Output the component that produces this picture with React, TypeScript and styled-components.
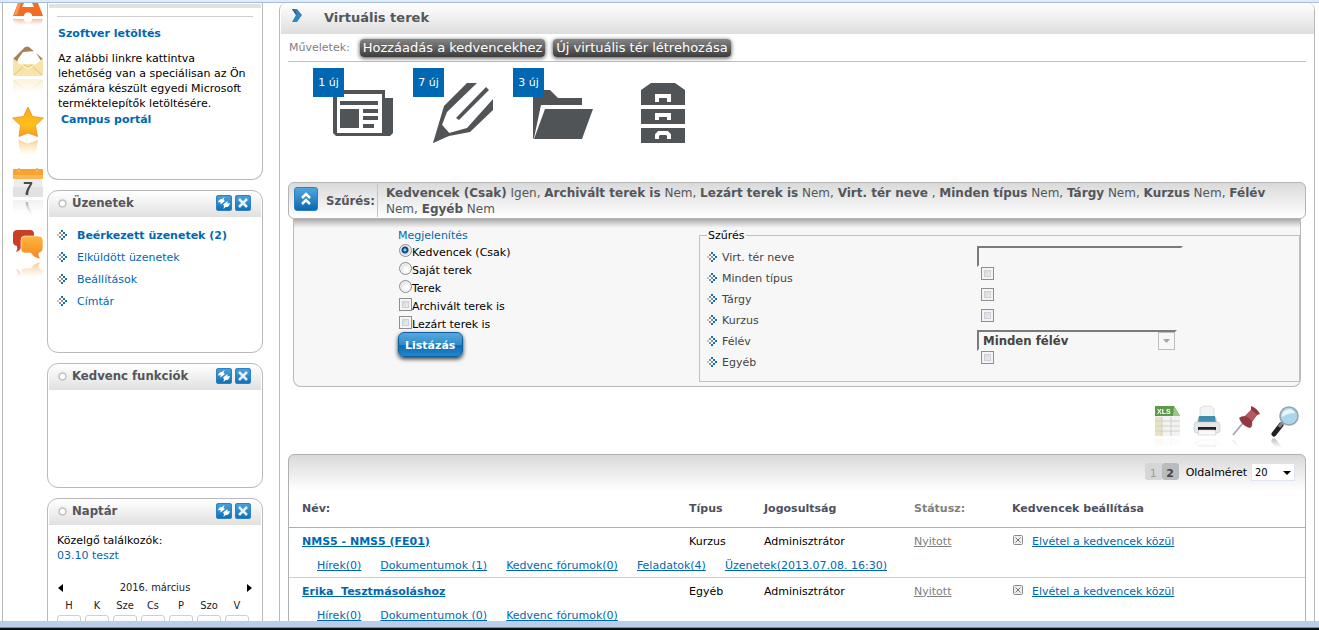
import React from "react";
import styled, { createGlobalStyle } from "styled-components";

const sans = '"DejaVu Sans", Verdana, sans-serif';
const condensed = '"DejaVu Sans Condensed", "DejaVu Sans", Tahoma, sans-serif';

const blue = "#0068b3";
const slate = "#53565a";
const line = "#b9b9b9";

const GlobalStyle = createGlobalStyle`
  *, *::before, *::after { box-sizing: border-box; }
  body {
    margin: 0;
    background: #fff;
    color: #000;
    font-family: ${sans};
    font-size: 11px;
    line-height: 15px;
  }
  a { color: ${blue}; }
  button, input, select { font: inherit; margin: 0; }
  h1, h2, p, ul, dl, dd { margin: 0; padding: 0; }
  ul { list-style: none; }
`;

/* ---------- page frame ---------- */

const Page = styled.div`
  display: flex;
  flex-direction: column;
  height: 100vh;
  overflow: hidden;
`;

const TopEdge = styled.div`
  flex: none;
  height: 3px;
  background: #dfeafa;
  border-bottom: 1px solid #a5bfda;
`;

const BottomEdge = styled.div`
  flex: none;
  height: 9px;
  background: #b8d0ea;
  border-bottom: 2px solid #0b0f14;
  box-shadow: inset 0 -1px 0 #2fb4cf;
`;

const Body = styled.div`
  flex: 1;
  min-height: 0;
  display: flex;
  margin-left: 2px;
  padding-right: 4px;
  border-left: 1px solid ${line};
  overflow: hidden;
`;

/* ---------- icon rail ---------- */

const Rail = styled.nav`
  flex: none;
  width: 44px;
  display: flex;
  flex-direction: column;
  padding-left: 9px;
`;

const RailLink = styled.a<{ $first?: boolean }>`
  display: block;
  height: ${(p) => (p.$first ? 42 : 61)}px;
  svg {
    display: block;
    -webkit-box-reflect: below 1px linear-gradient(transparent 50%, rgba(0, 0, 0, 0.5));
  }
`;

/* ---------- side panels ---------- */

const Side = styled.aside`
  flex: none;
  width: 216px;
  display: flex;
  flex-direction: column;
  gap: 10px;
`;

const Panel = styled.section<{ $min: number; $open?: boolean }>`
  flex: none;
  min-height: ${(p) => p.$min}px;
  padding: 1px;
  border: 1px solid #bcb8bb;
  border-top-width: ${(p) => (p.$open ? 0 : 1)}px;
  border-radius: ${(p) => (p.$open ? "0 0 11px 11px" : "11px")};
`;

const PanelHead = styled.header`
  display: flex;
  align-items: center;
  gap: 3px;
  height: 25px;
  padding: 0 10px 4px 8px;
  border-radius: 9px 9px 0 0;
  background: linear-gradient(#fff, #e0e0e0);
`;

const HeadTail = styled.div`
  height: 4px;
  background: #e1e1e1;
`;

const PanelTitle = styled.h2`
  flex: 1;
  padding-left: 1px;
  color: ${slate};
  font: bold 13px/18px ${condensed};
`;

const PanelButton = styled.button`
  width: 16px;
  height: 16px;
  padding: 0;
  border: 0;
  border-radius: 3px;
  background: linear-gradient(#4fa5dc, #0b6db5);
  box-shadow: inset 0 0 0 1px #2c83c1;
  svg { display: block; }
`;

const PanelBody = styled.div`
  padding: 8px 8px 0;
`;

const NewsBody = styled.div`
  margin: 8px 8px 0;
  padding-top: 9px;
  border-top: 1px solid #cfcfcf;
`;

const NewsTitle = styled.h2`
  padding: 0 1px;
  color: ${blue};
  font: bold 11px/15px ${sans};
`;

const NewsText = styled.p`
  padding: 10px 0 0 1px;
  white-space: pre-line;
`;

const CampusLink = styled.a`
  display: block;
  padding: 1px 4px;
  font-weight: bold;
  text-decoration: none;
`;

const MenuItem = styled.li<{ $bold?: boolean }>`
  display: flex;
  align-items: center;
  gap: 10px;
  height: 22px;
  padding-bottom: 2px;
  font-weight: ${(p) => (p.$bold ? "bold" : "normal")};
  a { text-decoration: none; }
`;

const PlainLink = styled.a`
  text-decoration: none;
`;

const MonthBar = styled.div`
  display: flex;
  justify-content: space-between;
  align-items: center;
  margin-top: 17px;
  font-family: ${condensed};
  color: #222;
`;

const MonthButton = styled.button`
  padding: 0 1px;
  border: 0;
  background: none;
  svg { display: block; }
`;

const Calendar = styled.table`
  width: 200px;
  margin: 2px -4px 0;
  border-collapse: separate;
  border-spacing: 4px 0;
  table-layout: fixed;
  font-family: ${condensed};
  color: #222;
  th { padding: 1px 0 2px; font-weight: normal; }
  td {
    height: 20px;
    border: 1px solid #cfcfcf;
    border-radius: 3px;
    background: linear-gradient(#fff, #f0f0f0);
  }
`;

/* ---------- main area ---------- */

const Main = styled.main`
  flex: 1;
  min-width: 0;
  margin-left: 16px;
  border: solid ${line};
  border-width: 0 1px;
  border-radius: 7px 7px 0 0;
`;

const TitleBar = styled.header`
  display: flex;
  align-items: center;
  gap: 21px;
  height: 31px;
  padding: 0 10px 2px;
  margin-left: 1px;
  border-radius: 7px 7px 0 0;
  background: linear-gradient(#fff, #dedede);
  svg { margin-bottom: 3px; }
`;

const Title = styled.h1`
  color: ${slate};
  font: bold 13px/16px ${sans};
`;

const Content = styled.div`
  padding: 0 8px;
`;

const Actions = styled.div`
  display: flex;
  align-items: center;
  gap: 8px;
  height: 28px;
  padding: 0 1px;
  border-bottom: 1px solid #c0c0c0;
  color: #808080;
  span { padding-right: 2px; }
`;

const DarkButton = styled.button`
  height: 18px;
  padding: 0 3px;
  border: 0;
  border-radius: 4px;
  background: linear-gradient(#858585, #3c3c3c);
  box-shadow: 0 1px 4px #444;
  color: #fff;
  font-size: 13px;
  line-height: 16px;
`;

const Tiles = styled.div`
  display: flex;
  gap: 40px;
  height: 120px;
  padding: 21px 0 0 45px;
`;

const Tile = styled.a`
  position: relative;
  width: 60px;
  height: 60px;
  color: #515457;
  svg { display: block; }
`;

const Badge = styled.span`
  position: absolute;
  left: -20px;
  top: -15px;
  width: 31px;
  height: 29px;
  background: ${blue};
  color: #fff;
  line-height: 30px;
  text-align: center;
`;

/* ---------- filter ---------- */

const FilterHead = styled.div`
  display: flex;
  align-items: center;
  height: 37px;
  border: 1px solid #b3b3b3;
  border-radius: 6px;
  background: linear-gradient(#dadada, #fff);
  color: ${slate};
`;

const FoldButton = styled.button`
  width: 24px;
  height: 24px;
  margin: 0 0 3px 5px;
  padding: 0;
  border: 1px solid #2b81be;
  border-radius: 3px;
  background: linear-gradient(#52a5dd, #0a69b1);
  svg { display: block; margin: auto; }
`;

const FilterLabel = styled.h2`
  width: 59px;
  padding-left: 8px;
  white-space: nowrap;
  font: bold 13px/16px ${condensed};
`;

const FilterSummary = styled.p`
  flex: 1;
  align-self: stretch;
  margin: 1px 0;
  padding: 1px 12px 0 8px;
  border-left: 1px solid #c4c4c4;
  font-size: 12px;
  line-height: 16px;
`;

const FilterBody = styled.form`
  display: flex;
  margin: 0 5px;
  min-height: 168px;
  padding: 8px 0 4px 104px;
  border: 1px solid ${line};
  border-top: 0;
  border-radius: 0 0 8px 8px;
  background: linear-gradient(#a9a9a9, #cfcfcf 4px, #f7f7f7 9px);
`;

const DisplayGroup = styled.div`
  width: 301px;
`;

const GroupName = styled.div`
  height: 17px;
  color: ${blue};
  line-height: 18px;
`;

const Choice = styled.label`
  display: flex;
  height: 18px;
  line-height: 18px;
`;

const Radio = styled.input`
  appearance: none;
  width: 13px;
  height: 13px;
  margin-left: 1px;
  border: 1px solid #8e8f8f;
  border-radius: 50%;
  background: radial-gradient(circle at 60% 60%, #fff 20%, #c0c5cc);
  box-shadow: inset 0 0 0 1px #f4f4f4;
  &:checked {
    background: radial-gradient(circle at 45% 45%, #7fd0f0 0 1px, #0b4f83 2px 3px, #d6dde4 4px);
  }
`;

const Check = styled.input`
  appearance: none;
  flex: none;
  display: block;
  width: 13px;
  height: 13px;
  margin-left: 1px;
  border: 1px solid #8e8f8f;
  background: linear-gradient(135deg, #cbcfd5, #f6f6f6) padding-box;
  box-shadow: inset 0 0 0 2px #f4f4f4, inset 0 0 0 3px #cdd0d4;
`;

const ListButton = styled.button`
  display: block;
  height: 25px;
  margin-top: -2px;
  padding: 2px 7px 0 6px;
  border: 1px solid #0d5f9f;
  border-radius: 6px;
  background: linear-gradient(#58a8dc, #2f8ccb 50%, #0c6bb3 55%, #2187c9);
  box-shadow: 0 2px 4px #333;
  color: #fff;
  font-weight: bold;
`;

const Fieldset = styled.fieldset`
  flex: 1;
  min-width: 0;
  margin: 1px 0 0;
  padding: 2px 7px 0;
  border: 1px solid #c0c0c0;
  legend { padding: 0 1px; color: #000; }
`;

const FieldRow = styled.div`
  display: flex;
  height: 21px;
`;

const FieldLabel = styled.label`
  display: flex;
  align-items: center;
  gap: 5px;
  width: 270px;
  height: 24px;
  color: #444;
`;

const FieldCheck = styled(Check)`
  margin: 1px 0 0 4px;
`;

const FieldText = styled.input`
  width: 206px;
  height: 21px;
  margin-top: 1px;
  padding: 0 4px;
  border: 2px solid #7b7b7b;
  border-right-color: transparent;
  border-bottom-color: transparent;
  background: transparent;
`;

const FieldSelect = styled.div`
  display: flex;
  align-items: center;
  width: 200px;
  height: 21px;
  margin-top: 1px;
  border: 2px solid #7b7b7b;
  border-right-color: transparent;
  border-bottom-color: transparent;
  select {
    appearance: none;
    flex: 1;
    height: 17px;
    padding: 0 4px;
    border: 0;
    background: transparent;
    color: #444;
    font: bold 13px/17px ${condensed};
  }
  span {
    display: grid;
    place-items: center;
    width: 17px;
    height: 18px;
    border: 1px solid #bdbdbd;
  }
`;

/* ---------- export tools ---------- */

const Tools = styled.div`
  display: flex;
  justify-content: flex-end;
  gap: 11px;
  height: 67px;
  padding: 18px 7px 0 0;
`;

const Tool = styled.button`
  width: 28px;
  height: 32px;
  padding: 0;
  border: 0;
  background: none;
  svg {
    display: block;
    -webkit-box-reflect: below 1px linear-gradient(transparent 70%, rgba(0, 0, 0, 0.3));
  }
`;

/* ---------- result list ---------- */

const Results = styled.section`
  min-height: 300px;
  border: 1px solid #b0b0b0;
  border-radius: 6px 6px 0 0;
  background: linear-gradient(#d9d9d9, #fff 36px);
`;

const Pager = styled.div`
  display: flex;
  justify-content: flex-end;
  align-items: center;
  height: 36px;
  padding: 0 10px 2px 0;
`;

const PageButton = styled.button<{ $current?: boolean }>`
  width: 17px;
  height: 17px;
  margin-bottom: 2px;
  padding: 4px 0 0;
  border: 0;
  border-radius: ${(p) => (p.$current ? "3px" : "3px 0 0 3px")};
  background: ${(p) => (p.$current ? "#b9bbbc" : "#d5d6d7")};
  color: ${(p) => (p.$current ? "#444" : "#999")};
  font-weight: ${(p) => (p.$current ? "bold" : "normal")};
  line-height: 13px;
`;

const SizeLabel = styled.label`
  display: flex;
  align-items: center;
  gap: 4px;
  padding-left: 7px;
`;

const SizeBox = styled.span`
  position: relative;
  display: block;
  select {
    appearance: none;
    display: block;
    width: 44px;
    height: 18px;
    padding: 0 3px;
    border: 1px solid #dde4f0;
    background: #fff;
    font-family: ${condensed};
  }
  svg {
    position: absolute;
    right: 4px;
    top: 8px;
    pointer-events: none;
  }
`;

const List = styled.table`
  width: 100%;
  table-layout: fixed;
  border-collapse: collapse;
  th, td { padding: 0; text-align: left; }
  th {
    height: 36px;
    border-bottom: 1px solid #b0b0b0;
    color: #4d5060;
    font-weight: bold;
  }
  td { height: 25px; padding-top: 3px; }
  th:first-child, td:first-child { padding-left: 13px; }
`;

const Col = styled.col<{ $w?: number }>`
  width: ${(p) => (p.$w ? `${p.$w}px` : "auto")};
`;

const GreyHead = styled.th`
  && { color: #808080; }
`;

const NameLink = styled.a`
  font-weight: bold;
`;

const GreyLink = styled.a`
  color: #808080;
`;

const Favourite = styled.span`
  display: flex;
  align-items: center;
  gap: 8px;
  svg { margin-bottom: 3px; }
`;

const SubRow = styled.tr`
  border-bottom: 1px solid #cfcfcf;
`;

const SubLinks = styled.div`
  display: flex;
  gap: 19px;
  padding-left: 15px;
`;

/* ---------- drawings ---------- */

const Bullet = () => (
  <svg width="10" height="10" viewBox="0 0 10 10" shapeRendering="crispEdges" aria-hidden="true">
    <path fill="#1470b5" d="M4 0h2v2H4zM6 2h2v2H6zM8 4h2v2H8zM6 6h2v2H6zM4 8h2v2H4z" />
    <path fill="#929292" d="M4 4h2v2H4zM2 2h2v2H2zM2 6h2v2H2z" />
    <path fill="#c4c4c4" d="M0 4h2v2H0z" />
  </svg>
);

const Ring = () => (
  <svg width="11" height="11" viewBox="0 0 11 11" aria-hidden="true">
    <circle cx="5.5" cy="6.5" r="3.500" fill="#fff" stroke="#bdbdbd" strokeWidth="1.600" />
    <circle cx="5.5" cy="6.5" r="4.600" fill="none" stroke="#e4e4e4" strokeWidth=".8" />
  </svg>
);

const RefreshGlyph = () => (
  <svg width="16" height="16" viewBox="0 0 16 16" fill="#fff" aria-hidden="true">
    <path d="M8.500 2L7.500 5L9 6L4.500 9.500L4.500 7L2 7.500C2.500 5 4.500 3.500 6 4z" />
    <path d="M7.500 14L8 11L7 9.500L11.500 6L11.500 8.500L14 8C13.500 10.500 12 12.500 9.500 12z" />
  </svg>
);

const CloseGlyph = () => (
  <svg width="16" height="16" viewBox="0 0 16 16" aria-hidden="true">
    <path d="M4 4l8 8M12 4l-8 8" stroke="#e6f1fa" strokeWidth="2.500" />
  </svg>
);

const ToyIcon = () => (
  <svg width="32" height="14" viewBox="0 0 32 14" aria-hidden="true">
    <path d="M6 0H26L31 13H20C20 8 12 8 12 13H1z" fill="#f36c21" />
    <path d="M12 0H20L22 4H10z" fill="#fff" />
    <path d="M6 0H9L5 12H2z" fill="#f99850" />
  </svg>
);

const MailIcon = () => (
  <svg width="32" height="32" viewBox="0 0 32 32" aria-hidden="true">
    <path d="M1 14L13 2Q15 1 17 2L31 14V18H1z" fill="#a58355" />
    <path d="M6 14L11 7L23 6L29 16L16 25L5 18z" fill="#fff" />
    <path d="M1 14L7 19H25L31 14V29Q31 31 29 31H3Q1 31 1 29z" fill="#f8e4ab" />
    <path d="M2 30L13 20L16 22L19 20L30 30" fill="none" stroke="#e2bf72" />
    <path d="M1 14L16 24L31 14" fill="none" stroke="#fff3cf" />
  </svg>
);

const StarIcon = () => (
  <svg width="32" height="32" viewBox="0 0 32 32" aria-hidden="true">
    <defs>
      <linearGradient id="star" x1="0" y1="0" x2="0" y2="1">
        <stop offset="0" stopColor="#f9a51f" />
        <stop offset=".6" stopColor="#fdc21a" />
        <stop offset="1" stopColor="#f59a22" />
      </linearGradient>
    </defs>
    <path
      d="M16 1L20.500 10.500L31.500 12L23.500 19.500L25.500 30.500L16 27L7 30.500L8.500 19.500L.5 12L11.500 10.500z"
      fill="url(#star)"
      stroke="#f0912b"
      strokeWidth=".8"
      strokeLinejoin="round"
    />
  </svg>
);

const CalendarIcon = () => (
  <svg width="32" height="31" viewBox="0 0 32 31" aria-hidden="true">
    <path d="M2 11H30L31 30H1z" fill="#ececec" />
    <path d="M1 20H31V30H1z" fill="#e2e2e2" />
    <rect x="1" y="2" width="30" height="10" rx="1" fill="#f9a22c" />
    <path d="M1 8H31V12H1z" fill="#fbb655" />
    <path d="M7 1V5M25 1V5" stroke="#d9b98d" strokeWidth="2" />
    <text x="16" y="28" textAnchor="middle" fontFamily="Liberation Sans, sans-serif" fontWeight="bold" fontSize="18" fill="#4b4b4b">7</text>
  </svg>
);

const ChatIcon = () => (
  <svg width="32" height="32" viewBox="0 0 32 32" aria-hidden="true">
    <defs>
      <linearGradient id="chat" x1="0" y1="0" x2="0" y2="1">
        <stop offset="0" stopColor="#fdb63f" />
        <stop offset="1" stopColor="#f5861f" />
      </linearGradient>
    </defs>
    <path d="M6 2H18Q22 2 22 6V14Q22 18 18 18H10Q9 22 4 24Q6 21 5 18Q1 17 1 14V6Q1 2 6 2z" fill="#c93f26" />
    <path d="M13 8H26Q31 8 31 13V20Q31 24 27 25Q26 28 29 31Q21 30 19 25H13Q9 25 9 21V12Q9 8 13 8z" fill="url(#chat)" stroke="#fff" strokeWidth=".6" />
  </svg>
);

const NewsTile = () => (
  <svg width="60" height="60" viewBox="0 0 60 60" fill="currentColor" aria-hidden="true">
    <path fillRule="evenodd" d="M0 7H52V15H60V50L57 53H3L0 50zM4 11V50H49V11z" />
    <path d="M7 18H45V22H7zM7 26H26V45H7zM30 26H45V30H30zM30 33H45V37H30zM30 41H41V45H30z" />
  </svg>
);

const PencilTile = () => (
  <svg width="60" height="60" viewBox="0 0 60 60" fill="currentColor" aria-hidden="true">
    <path d="M0 60L11 23L34 0H44L14 29L9 42L16 50L34 45L60 16V27L37 49L16 53z" />
    <path d="M9 42L17 51L0 60zM53 4L56 7L26 37L23 35z" />
  </svg>
);

const FolderTile = () => (
  <svg width="60" height="60" viewBox="0 0 60 60" fill="currentColor" aria-hidden="true">
    <path d="M0 7H17L25 15H49V22H8L1 55L0 56z" />
    <path d="M12 26H60L49 56H1z" />
  </svg>
);

const CabinetTile = () => (
  <svg width="60" height="60" viewBox="0 0 60 60" fill="currentColor" aria-hidden="true">
    <path d="M8 7L18 0H42L52 7V22H8zM8 26H52V41H8zM8 45H52V60H8z" />
    <g fill="none" stroke="#fff" strokeWidth="4">
      <path d="M24 19V13H36V19M24 37V32H36V37M24 56V52L26 50H34L36 52V56" />
    </g>
  </svg>
);

const XlsIcon = () => (
  <svg width="28" height="32" viewBox="0 0 28 32" aria-hidden="true">
    <path d="M1 1H20L26 10V31H1z" fill="#f3f3f1" />
    <path d="M1 12H8V31H1z" fill="#ebe2bf" />
    <path d="M1 16H26M1 21H26M1 26H26M8 12V31M17 12V31" stroke="#d0d0ce" />
    <path d="M1 1H20L26 11H1z" fill="#5e9a48" />
    <path d="M20 1L26 11H19z" fill="#9cc58a" />
    <text x="3" y="9" fontFamily="Liberation Sans, sans-serif" fontWeight="bold" fontSize="7" fill="#fff">XLS</text>
  </svg>
);

const PrinterIcon = () => (
  <svg width="28" height="32" viewBox="0 0 28 32" aria-hidden="true">
    <path d="M7 14V3L11 1H18L21 4V14z" fill="#f4f4f4" stroke="#ccc" strokeWidth=".6" />
    <path d="M3 18L5 12H23L25 18z" fill="#dedede" />
    <path d="M6 11H22L23 18H5z" fill="#3f8dad" />
    <rect x="1" y="17" width="26" height="11" rx="3" fill="#e6e7e8" stroke="#c4c4c4" strokeWidth=".6" />
    <rect x="5" y="22" width="18" height="3" fill="#222" />
    <path d="M6 25H22L23 30H5z" fill="#fafafa" stroke="#c9c9c9" strokeWidth=".6" />
  </svg>
);

const PinIcon = () => (
  <svg width="28" height="32" viewBox="0 0 28 32" aria-hidden="true">
    <path d="M11 18L1 30" stroke="#a5a5a5" strokeWidth="1.800" />
    <path d="M19 1Q25 3 28 9L25 10L20 17Q21 21 18 23Q10 21 7 13Q9 11 13 11L19 5z" fill="#943842" />
    <path d="M19 5L13 11Q17 12 20 16L25 10Q22 6 19 5z" fill="#b65a62" />
  </svg>
);

const SearchIcon = () => (
  <svg width="28" height="32" viewBox="0 0 28 32" aria-hidden="true">
    <path d="M10 20L3 29" stroke="#222" strokeWidth="5" strokeLinecap="round" />
    <path d="M12 17L8 22" stroke="#888" strokeWidth="3" />
    <circle cx="18" cy="11" r="9" fill="#a9d8ec" stroke="#9aa4aa" strokeWidth="1.600" />
    <path d="M11 10A7 7 0 0 1 24 8Q17 8 11 12z" fill="#e6f6fc" />
  </svg>
);

const RemoveIcon = () => (
  <svg width="12" height="12" viewBox="0 0 12 12" aria-hidden="true">
    <rect x="1.500" y="1.500" width="9" height="9" rx="1" fill="#eee" stroke="#8a8a8a" />
    <path d="M3.500 3.500l5 5M8.500 3.500l-5 5" stroke="#777" />
  </svg>
);

const Down = ({ color, size }: { color: string; size: number }) => (
  <svg width={size} height="4" viewBox="0 0 8 4" preserveAspectRatio="none" aria-hidden="true">
    <path d="M0 0H8L4 4z" fill={color} />
  </svg>
);

/* ---------- parts ---------- */

const SidePanel = ({ title, min, children }: { title: string; min: number; children?: React.ReactNode }) => (
  <Panel $min={min}>
    <PanelHead>
      <Ring />
      <PanelTitle>{title}</PanelTitle>
      <PanelButton aria-label="Frissítés"><RefreshGlyph /></PanelButton>
      <PanelButton aria-label="Bezárás"><CloseGlyph /></PanelButton>
    </PanelHead>
    {children}
  </Panel>
);

const summary: [string, string][] = [
  ["Kedvencek (Csak)", " Igen, "],
  ["Archivált terek is", " Nem, "],
  ["Lezárt terek is", " Nem, "],
  ["Virt. tér neve", " , "],
  ["Minden típus", " Nem, "],
  ["Tárgy", " Nem, "],
  ["Kurzus", " Nem, "],
  ["Félév", " Nem, "],
  ["Egyéb", " Nem"],
];

const spaces = [
  {
    name: "NMS5 - NMS5 (FE01)",
    type: "Kurzus",
    links: ["Hírek(0)", "Dokumentumok (1)", "Kedvenc fórumok(0)", "Feladatok(4)", "Üzenetek(2013.07.08. 16:30)"],
  },
  {
    name: "Erika\u00a0 Tesztmásoláshoz",
    type: "Egyéb",
    links: ["Hírek(0)", "Dokumentumok (0)", "Kedvenc fórumok(0)"],
  },
];

const menu = ["Beérkezett üzenetek (2)", "Elküldött üzenetek", "Beállítások", "Címtár"];
const days = ["H", "K", "Sze", "Cs", "P", "Szo", "V"];

const CheckField = ({ id, label }: { id: string; label: string }) => (
  <FieldRow>
    <FieldLabel htmlFor={id}><Bullet />{label}</FieldLabel>
    <FieldCheck type="checkbox" id={id} />
  </FieldRow>
);

export default function App() {
  return (
    <Page>
      <GlobalStyle />
      <TopEdge />
      <Body>
        <Rail>
          <RailLink href="#" $first aria-label="Alkalmazások"><ToyIcon /></RailLink>
          <RailLink href="#" aria-label="Levelek"><MailIcon /></RailLink>
          <RailLink href="#" aria-label="Kedvencek"><StarIcon /></RailLink>
          <RailLink href="#" aria-label="Naptár"><CalendarIcon /></RailLink>
          <RailLink href="#" aria-label="Fórum"><ChatIcon /></RailLink>
        </Rail>

        <Side>
          <Panel $min={177} $open>
            <HeadTail />
            <NewsBody>
              <NewsTitle>Szoftver letöltés</NewsTitle>
              <NewsText>
                Az alábbi linkre kattintva{"\n"}lehetőség van a speciálisan az Ön számára készült egyedi Microsoft terméktelepítők letöltésére.
              </NewsText>
              <CampusLink href="#">Campus portál</CampusLink>
            </NewsBody>
          </Panel>
          <SidePanel title="Üzenetek" min={163}>
            <PanelBody>
              <ul>
                {menu.map((m, i) => (
                  <MenuItem key={m} $bold={i === 0}><Bullet /><a href="#">{m}</a></MenuItem>
                ))}
              </ul>
            </PanelBody>
          </SidePanel>
          <SidePanel title="Kedvenc funkciók" min={125} />
          <SidePanel title="Naptár" min={240}>
            <PanelBody>
              <div>Közelgő találkozók:</div>
              <PlainLink href="#">03.10 teszt</PlainLink>
              <MonthBar>
                <MonthButton aria-label="Előző hónap">
                  <svg width="5" height="8" viewBox="0 0 5 8"><path d="M5 0V8L0 4z" /></svg>
                </MonthButton>
                <span>2016. március</span>
                <MonthButton aria-label="Következő hónap">
                  <svg width="5" height="8" viewBox="0 0 5 8"><path d="M0 0V8L5 4z" /></svg>
                </MonthButton>
              </MonthBar>
              <Calendar>
                <thead><tr>{days.map((d) => <th key={d}>{d}</th>)}</tr></thead>
                <tbody><tr>{days.map((d) => <td key={d} />)}</tr></tbody>
              </Calendar>
            </PanelBody>
          </SidePanel>
        </Side>

        <Main>
          <TitleBar>
            <svg width="12" height="14" viewBox="0 0 12 14" aria-hidden="true">
              <path d="M1 0H6L11 6L6 13H1L5 6z" fill="#2f86c6" />
              <path d="M1 0H3L6 5L5 6z" fill="#3c5a74" />
            </svg>
            <Title>Virtuális terek</Title>
          </TitleBar>
          <Content>
            <Actions>
              <span>Műveletek:</span>
              <DarkButton>Hozzáadás a kedvencekhez</DarkButton>
              <DarkButton>Új virtuális tér létrehozása</DarkButton>
            </Actions>

            <Tiles>
              <Tile href="#" aria-label="Hírek"><NewsTile /><Badge>1 új</Badge></Tile>
              <Tile href="#" aria-label="Fórumok"><PencilTile /><Badge>7 új</Badge></Tile>
              <Tile href="#" aria-label="Dokumentumok"><FolderTile /><Badge>3 új</Badge></Tile>
              <Tile href="#" aria-label="Archívum"><CabinetTile /></Tile>
            </Tiles>

            <FilterHead>
              <FoldButton aria-label="Szűrés elrejtése">
                <svg width="10" height="14" viewBox="0 0 10 14" fill="none" stroke="#fff" strokeWidth="2.500">
                  <path d="M1 6L5 2L9 6M1 12L5 8L9 12" />
                </svg>
              </FoldButton>
              <FilterLabel>Szűrés:</FilterLabel>
              <FilterSummary>
                {summary.map(([k, v]) => (
                  <React.Fragment key={k}><b>{k}</b>{v}</React.Fragment>
                ))}
              </FilterSummary>
            </FilterHead>

            <FilterBody onSubmit={(e) => e.preventDefault()}>
              <DisplayGroup>
                <GroupName>Megjelenítés</GroupName>
                <Choice><Radio type="radio" name="show" defaultChecked />Kedvencek (Csak)</Choice>
                <Choice><Radio type="radio" name="show" />Saját terek</Choice>
                <Choice><Radio type="radio" name="show" />Terek</Choice>
                <Choice><Check type="checkbox" />Archivált terek is</Choice>
                <Choice><Check type="checkbox" />Lezárt terek is</Choice>
                <ListButton>Listázás</ListButton>
              </DisplayGroup>
              <Fieldset>
                <legend>Szűrés</legend>
                <FieldRow>
                  <FieldLabel htmlFor="name"><Bullet />Virt. tér neve</FieldLabel>
                  <FieldText id="name" type="text" />
                </FieldRow>
                <CheckField id="type" label="Minden típus" />
                <CheckField id="subject" label="Tárgy" />
                <CheckField id="course" label="Kurzus" />
                <FieldRow>
                  <FieldLabel htmlFor="term"><Bullet />Félév</FieldLabel>
                  <FieldSelect>
                    <select id="term"><option>Minden félév</option></select>
                    <span><Down color="#a5a5a5" size={7} /></span>
                  </FieldSelect>
                </FieldRow>
                <CheckField id="other" label="Egyéb" />
              </Fieldset>
            </FilterBody>

            <Tools>
              <Tool aria-label="Exportálás"><XlsIcon /></Tool>
              <Tool aria-label="Nyomtatás"><PrinterIcon /></Tool>
              <Tool aria-label="Rögzítés"><PinIcon /></Tool>
              <Tool aria-label="Keresés"><SearchIcon /></Tool>
            </Tools>

            <Results>
              <Pager>
                <PageButton>1</PageButton>
                <PageButton $current>2</PageButton>
                <SizeLabel>
                  Oldalméret
                  <SizeBox>
                    <select><option>20</option></select>
                    <Down color="#000" size={8} />
                  </SizeBox>
                </SizeLabel>
              </Pager>
              <List>
                <colgroup>
                  <Col />
                  <Col $w={75} />
                  <Col $w={150} />
                  <Col $w={98} />
                  <Col $w={293} />
                </colgroup>
                <thead>
                  <tr>
                    <th>Név:</th>
                    <th>Típus</th>
                    <th>Jogosultság</th>
                    <GreyHead>Státusz:</GreyHead>
                    <th>Kedvencek beállítása</th>
                  </tr>
                </thead>
                <tbody>
                  {spaces.map((s) => (
                    <React.Fragment key={s.name}>
                      <tr>
                        <td><NameLink href="#">{s.name}</NameLink></td>
                        <td>{s.type}</td>
                        <td>Adminisztrátor</td>
                        <td><GreyLink href="#">Nyitott</GreyLink></td>
                        <td>
                          <Favourite><RemoveIcon /><a href="#">Elvétel a kedvencek közül</a></Favourite>
                        </td>
                      </tr>
                      <SubRow>
                        <td colSpan={5}>
                          <SubLinks>{s.links.map((l) => <a key={l} href="#">{l}</a>)}</SubLinks>
                        </td>
                      </SubRow>
                    </React.Fragment>
                  ))}
                </tbody>
              </List>
            </Results>
          </Content>
        </Main>
      </Body>
      <BottomEdge />
    </Page>
  );
}
